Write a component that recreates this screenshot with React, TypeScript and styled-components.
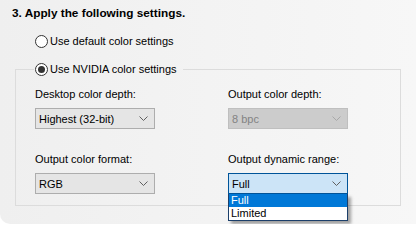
import * as React from "react"
import styled, { createGlobalStyle } from "styled-components"

const GlobalStyle = createGlobalStyle`
	html, body {
		margin: 0;
		padding: 0;
		background: #ffffff;
	}
	body {
		font-family: "Liberation Sans", Arial, sans-serif;
		font-size: 11px;
		color: #000000;
	}
`

const Panel = styled.div`
	width: 416px;
	box-sizing: border-box;
	padding: 5px 15px 18px 12px;
	background: linear-gradient(to right, #efefef, #f7f7f7);
	border-bottom-left-radius: 10px;
	display: flex;
	flex-direction: column;
	white-space: nowrap;
`

const Title = styled.div`
	font-weight: bold;
	font-size: 11.8px;
	line-height: 16px;
`

const RadioRow = styled.label`
	display: flex;
	align-items: center;
	gap: 2px;
	line-height: 16px;
	height: 16px;
`

const TopRadio = styled.div`
	margin: 12px 0 0 23px;
`

const RadioCircle = styled.span<{ $checked?: boolean }>`
	width: 13px;
	height: 13px;
	box-sizing: border-box;
	border: 1px solid #333333;
	border-radius: 50%;
	background: #ffffff;
	display: flex;
	align-items: center;
	justify-content: center;

	&::after {
		content: "";
		display: ${(p) => (p.$checked ? "block" : "none")};
		width: 7px;
		height: 7px;
		border-radius: 50%;
		background: #333333;
	}
`

const Group = styled.fieldset`
	margin: 12px 0 0 3px;
	padding: 9px 19px 11px 19px;
	border: 1px solid #dcdcdc;
	min-width: 0;
`

const Legend = styled.legend`
	padding: 0 6px 0 1px;
	margin-left: -1px;
`

const Grid = styled.div`
	display: grid;
	grid-template-columns: 120px 120px;
	column-gap: 73px;
	row-gap: 22px;
`

const Field = styled.div`
	display: flex;
	flex-direction: column;
	gap: 6px;
`

const Label = styled.div`
	line-height: 16px;
`

type ComboState = "normal" | "disabled" | "focused"

const comboColors: Record<ComboState, { bg: string; border: string; text: string; arrow: string }> = {
	normal: { bg: "#e5e5e5", border: "#adadad", text: "#000000", arrow: "#606060" },
	disabled: { bg: "#cccccc", border: "#bfbfbf", text: "#838383", arrow: "#a8a8a8" },
	focused: { bg: "#cce4f7", border: "#005499", text: "#000000", arrow: "#606060" },
}

const ComboWrap = styled.div`
	position: relative;
`

const ComboBox = styled.div<{ $state: ComboState }>`
	height: 21px;
	box-sizing: border-box;
	border: 1px solid ${(p) => comboColors[p.$state].border};
	background: ${(p) => comboColors[p.$state].bg};
	color: ${(p) => comboColors[p.$state].text};
	display: flex;
	align-items: center;
	justify-content: space-between;
	padding: 0 6px 0 3px;
`

const Chevron = ({ color }: { color: string }) => (
	<svg width="9" height="5" viewBox="0 0 9 5">
		<path d="M0.5 0.5 L4.5 4.5 L8.5 0.5" fill="none" stroke={color} strokeWidth="1" />
	</svg>
)

const DropList = styled.div`
	position: absolute;
	left: 0;
	top: 100%;
	width: 120px;
	box-sizing: border-box;
	border: 1px solid #1c3f6a;
	border-top: none;
	background: #ffffff;
	box-shadow: 3px 3px 3px rgba(0, 0, 0, 0.35);
	z-index: 2;
`

const DropItem = styled.div<{ $selected?: boolean }>`
	height: 13px;
	line-height: 13px;
	padding-left: 2px;
	background: ${(p) => (p.$selected ? "#0078d7" : "#ffffff")};
	color: ${(p) => (p.$selected ? "#ffffff" : "#000000")};
`

const Combo = ({ value, state = "normal", options }: { value: string; state?: ComboState; options?: string[] }) => (
	<ComboWrap>
		<ComboBox $state={state}>
			<span>{value}</span>
			<Chevron color={comboColors[state].arrow} />
		</ComboBox>
		{options && (
			<DropList>
				{options.map((o) => (
					<DropItem key={o} $selected={o === value}>
						{o}
					</DropItem>
				))}
			</DropList>
		)}
	</ComboWrap>
)

export default function App() {
	return (
		<>
			<GlobalStyle />
			<Panel>
				<Title>3. Apply the following settings.</Title>
				<TopRadio>
					<RadioRow>
						<RadioCircle />
						Use default color settings
					</RadioRow>
				</TopRadio>
				<Group>
					<Legend>
						<RadioRow>
							<RadioCircle $checked />
							Use NVIDIA color settings
						</RadioRow>
					</Legend>
					<Grid>
						<Field>
							<Label>Desktop color depth:</Label>
							<Combo value="Highest (32-bit)" />
						</Field>
						<Field>
							<Label>Output color depth:</Label>
							<Combo value="8 bpc" state="disabled" />
						</Field>
						<Field>
							<Label>Output color format:</Label>
							<Combo value="RGB" />
						</Field>
						<Field>
							<Label>Output dynamic range:</Label>
							<Combo value="Full" state="focused" options={["Full", "Limited"]} />
						</Field>
					</Grid>
				</Group>
			</Panel>
		</>
	)
}
